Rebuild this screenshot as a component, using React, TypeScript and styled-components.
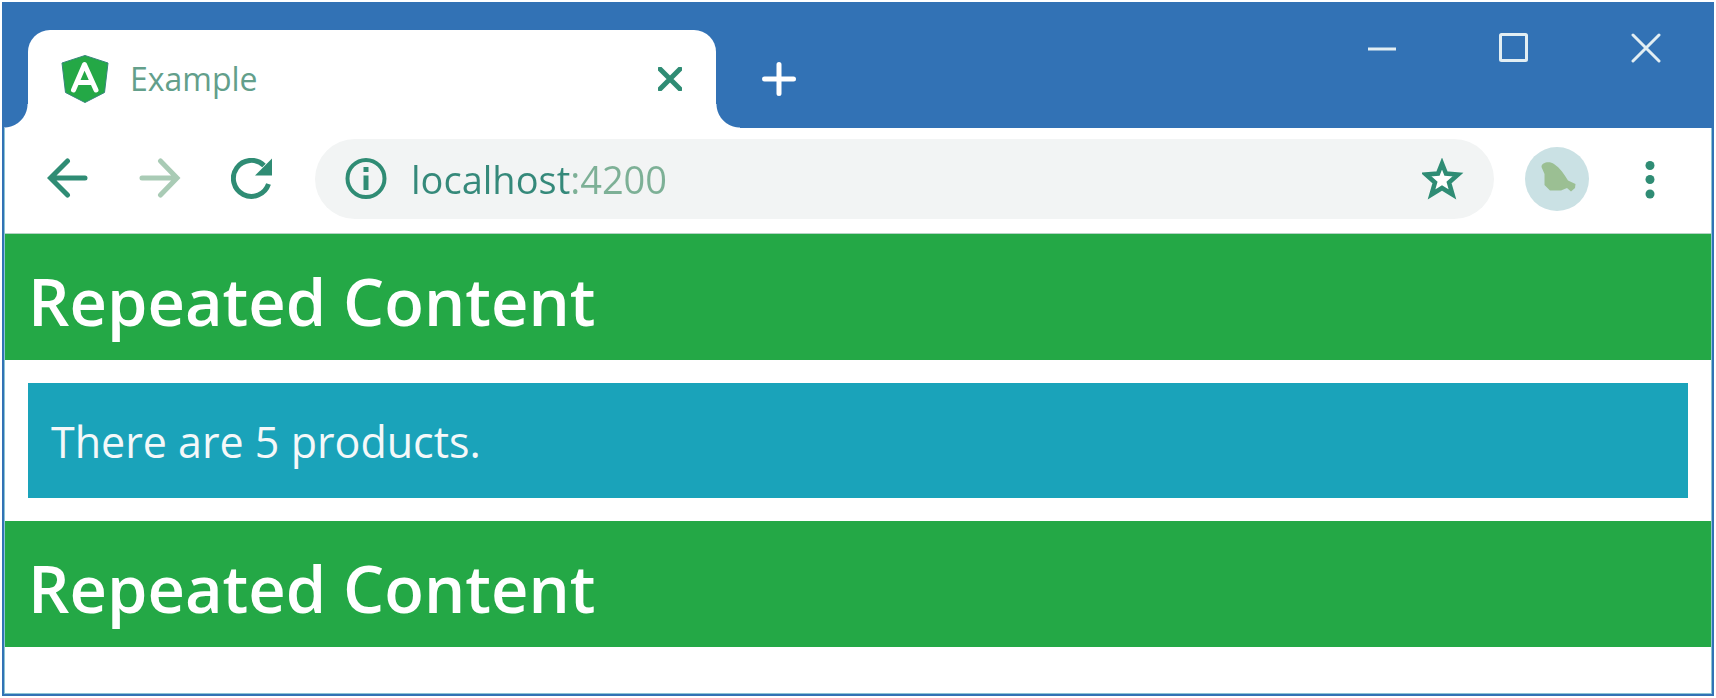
import React from "react";
import styled, { createGlobalStyle } from "styled-components";

const color = {
  frame: "#3272b5",
  edge: "#8cc4d4",
  green: "#24a846",
  cyan: "#1aa3ba",
  icon: "#2f8c74",
  faded: "#a9cbb5",
  pale: "#cae1e4",
  field: "#f2f4f4",
};

const GlobalStyle = createGlobalStyle`
  * { box-sizing: border-box; }
  body {
    margin: 0;
    padding: 2px;
    background: #fff;
    font-family: "Open Sans", "Noto Sans", sans-serif;
  }
`;

const BrowserWindow = styled.div`
  display: flex;
  flex-direction: column;
  min-height: calc(100vh - 4px);
  border: 2px solid ${color.frame};
`;

const TitleBar = styled.header`
  display: flex;
  justify-content: space-between;
  background: ${color.frame};
`;

const TabStrip = styled.div`
  display: flex;
  align-items: flex-end;
  flex: 0 1 auto;
  min-width: 0;
  padding: 26px 0 0 24px;
`;

const Tab = styled.div`
  position: relative;
  display: flex;
  align-items: center;
  gap: 21px;
  width: 688px;
  min-width: 0;
  height: 98px;
  padding: 0 24px 0 33px;
  border-radius: 22px 22px 0 0;
  background: #fff;

  &::before,
  &::after {
    content: "";
    position: absolute;
    bottom: 0;
    width: 24px;
    height: 24px;
  }
  &::before {
    right: 100%;
    background: radial-gradient(circle at 0 0, transparent 23px, #fff 24px);
  }
  &::after {
    left: 100%;
    background: radial-gradient(circle at 100% 0, transparent 23px, #fff 24px);
  }
`;

const TabTitle = styled.span`
  flex: 1;
  color: #639f8b;
  font-size: 32px;
  line-height: 44px;
`;

const IconButton = styled.button<{ $width: number; $height: number; $tone?: string }>`
  display: flex;
  flex: none;
  align-items: center;
  justify-content: center;
  width: ${(p) => p.$width}px;
  height: ${(p) => p.$height}px;
  padding: 0;
  border: 0;
  background: none;
  color: ${(p) => p.$tone ?? color.icon};
`;

const NewTab = styled.div`
  display: flex;
  align-items: center;
  height: 98px;
  margin-left: 33px;
`;

const WindowControls = styled.div`
  display: flex;
  flex: none;
`;

const Body = styled.div`
  display: flex;
  flex-direction: column;
  flex: 1;
  border: 1px solid ${color.edge};
  border-top: 0;
`;

const Toolbar = styled.div`
  display: flex;
  align-items: center;
  gap: 31px;
  padding: 11px 31px 14px 17px;
  border-bottom: 1px solid #b4d3c4;
`;

const Navigation = styled.nav`
  display: flex;
  flex: none;
  margin-right: -14px;
`;

const AddressBar = styled.form`
  display: flex;
  flex: 1;
  align-items: center;
  gap: 24px;
  min-width: 0;
  height: 80px;
  padding: 0 30px;
  border-radius: 40px;
  background: ${color.field};
`;

const AddressInput = styled.input`
  flex: 1;
  min-width: 0;
  height: 54px;
  padding: 0;
  border: 0;
  outline: 0;
  background: linear-gradient(to right, #35897a 160px, #7db096 160px);
  background-clip: text;
  -webkit-background-clip: text;
  color: transparent;
  font-family: inherit;
  font-size: 38px;
`;

const Avatar = styled.button`
  flex: none;
  width: 64px;
  height: 64px;
  padding: 0;
  border: 0;
  border-radius: 50%;
  background: ${color.pale};
`;

const Page = styled.main`
  flex: 1;
`;

const Band = styled.h1`
  margin: 0;
  padding: 27px 23px 19px;
  background: ${color.green};
  color: #fff;
  font-size: 65px;
  font-weight: 600;
  line-height: 80px;
`;

const Notice = styled.p`
  margin: 23px;
  padding: 24px 23px 22px;
  background: ${color.cyan};
  color: #f4f8f9;
  font-size: 43px;
  line-height: 69px;
`;

const ShieldIcon = () => (
  <svg width="48" height="48" viewBox="0 0 48 48" aria-hidden="true">
    <path d="M24 0.5 47 8 43.5 37.5 24 47.5 4.5 37.5 1 8Z" fill={color.green} stroke="#36877c" />
    <path d="M12.5 35 23.5 9.500 35 35M18 27.500H30" fill="none" stroke="#fff" strokeWidth="5" strokeLinecap="round" strokeLinejoin="round" />
  </svg>
);

const CrossIcon = ({ size, weight }: { size: number; weight: number }) => (
  <svg width={size} height={size} viewBox={`0 0 ${size} ${size}`} aria-hidden="true">
    <path d={`M2 2 ${size - 2} ${size - 2}M${size - 2} 2 2 ${size - 2}`} stroke="currentColor" strokeWidth={weight} strokeLinecap="round" />
  </svg>
);

const PlusIcon = () => (
  <svg width="36" height="36" viewBox="0 0 36 36" aria-hidden="true">
    <path d="M18 3.500V32.500M3.500 18H32.500" stroke="currentColor" strokeWidth="5" strokeLinecap="round" />
  </svg>
);

const MinimizeIcon = () => (
  <svg width="30" height="30" viewBox="0 0 30 30" aria-hidden="true">
    <path d="M1 16H29" stroke="currentColor" strokeWidth="3" />
  </svg>
);

const MaximizeIcon = () => (
  <svg width="30" height="30" viewBox="0 0 30 30" aria-hidden="true">
    <rect x="1.500" y="1.500" width="26" height="26" rx="1" fill="none" stroke="currentColor" strokeWidth="3" />
  </svg>
);

const ArrowIcon = ({ forward = false }: { forward?: boolean }) => (
  <svg width="42" height="42" viewBox="0 0 42 42" aria-hidden="true">
    <path
      d={forward ? "M3 20H37M21.500 3 38 20 21.500 37" : "M38 20H4M20.500 3 3.500 20 20.500 37"}
      fill="none"
      stroke="currentColor"
      strokeWidth="5"
      strokeLinecap="round"
    />
  </svg>
);

const ReloadIcon = () => (
  <svg width="42" height="42" viewBox="0 0 42 42" aria-hidden="true">
    <path d="M37.500 26A18 18 0 1 1 33 7.500" fill="none" stroke="currentColor" strokeWidth="5" />
    <path d="M41 0.500V17.500H24Z" fill="currentColor" />
  </svg>
);

const InfoIcon = () => (
  <svg width="42" height="42" viewBox="0 0 42 42" aria-hidden="true">
    <circle cx="21" cy="20.500" r="18.500" fill="none" stroke="currentColor" strokeWidth="4" />
    <path d="M18.500 9H23.500V14H18.500ZM18.500 17.500H23.500V32H18.500Z" fill="currentColor" />
  </svg>
);

const StarIcon = () => (
  <svg width="42" height="42" viewBox="0 0 42 42" aria-hidden="true">
    <path
      d="M20 5.500 24 15.500 36 16.500 27 24.500 30.500 36.500 20 30 9.500 36.500 13 24.500 4 16.500 16 15.500Z"
      fill="#fff"
      stroke="currentColor"
      strokeWidth="4.500"
    />
  </svg>
);

const BirdIcon = () => (
  <svg width="64" height="64" viewBox="0 0 64 64" aria-hidden="true">
    <path
      d="M16.500 20C16.500 15 25 14 29 17C35 21 39 27 43 33.500L50.500 37 50 41 46 44.500 42 41 36 43.500H25L19.500 38V27Z"
      fill="#9bbf93"
    />
  </svg>
);

const MoreIcon = () => (
  <svg width="12" height="42" viewBox="0 0 12 42" aria-hidden="true">
    <g fill="currentColor">
      <circle cx="6" cy="7.500" r="4.500" />
      <circle cx="6" cy="21.500" r="4.500" />
      <circle cx="6" cy="36" r="4.500" />
    </g>
  </svg>
);

export default function App() {
  return (
    <>
      <GlobalStyle />
      <BrowserWindow>
        <TitleBar>
          <TabStrip>
            <Tab>
              <ShieldIcon />
              <TabTitle>Example</TabTitle>
              <IconButton type="button" $width={44} $height={44} aria-label="Close tab">
                <CrossIcon size={24} weight={5} />
              </IconButton>
            </Tab>
            <NewTab>
              <IconButton type="button" $width={60} $height={60} $tone="#fff" aria-label="New tab">
                <PlusIcon />
              </IconButton>
            </NewTab>
          </TabStrip>
          <WindowControls>
            <IconButton type="button" $width={132} $height={88} $tone="#e2eef3" aria-label="Minimize">
              <MinimizeIcon />
            </IconButton>
            <IconButton type="button" $width={132} $height={88} $tone="#e2eef3" aria-label="Maximize">
              <MaximizeIcon />
            </IconButton>
            <IconButton type="button" $width={132} $height={88} $tone="#e2eef3" aria-label="Close window">
              <CrossIcon size={30} weight={3} />
            </IconButton>
          </WindowControls>
        </TitleBar>
        <Body>
          <Toolbar>
            <Navigation>
              <IconButton type="button" $width={92} $height={80} aria-label="Back">
                <ArrowIcon />
              </IconButton>
              <IconButton type="button" $width={92} $height={80} $tone={color.faded} aria-label="Forward">
                <ArrowIcon forward />
              </IconButton>
              <IconButton type="button" $width={92} $height={80} aria-label="Reload">
                <ReloadIcon />
              </IconButton>
            </Navigation>
            <AddressBar onSubmit={(e) => e.preventDefault()}>
              <IconButton type="button" $width={42} $height={42} aria-label="Site information">
                <InfoIcon />
              </IconButton>
              <AddressInput type="text" aria-label="Address" defaultValue="localhost:4200" spellCheck={false} />
              <IconButton type="button" $width={42} $height={42} aria-label="Bookmark">
                <StarIcon />
              </IconButton>
            </AddressBar>
            <Avatar type="button" aria-label="Profile">
              <BirdIcon />
            </Avatar>
            <IconButton type="button" $width={60} $height={60} aria-label="Menu">
              <MoreIcon />
            </IconButton>
          </Toolbar>
          <Page>
            <Band>Repeated Content</Band>
            <Notice>There are 5 products.</Notice>
            <Band>Repeated Content</Band>
          </Page>
        </Body>
      </BrowserWindow>
    </>
  );
}
